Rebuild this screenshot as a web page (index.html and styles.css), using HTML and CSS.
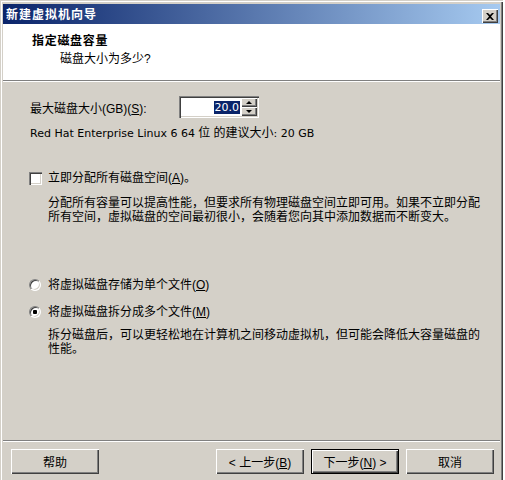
FILE: index.html
```html
<!DOCTYPE html>
<html>
<head>
	<title>新建虚拟机向导</title>
	<link rel="stylesheet" href="styles.css">
</head>
<body>
	<div class="window">
		<div class="titlebar">
			<span class="title">新建虚拟机向导</span>
			<span class="close">
				<svg width="8" height="7" viewBox="0 0 8 7"><path d="M0 0h2l2 2 2-2h2L5 3.5 8 7H6L4 5 2 7H0l3-3.5z" fill="#000"/></svg>
			</span>
		</div>

		<div class="client">
			<!-- wizard header -->
			<div class="header">
				<div class="heading">指定磁盘容量</div>
				<div class="subheading">磁盘大小为多少?</div>
			</div>

			<div class="content">
				<div class="size-row">
					<label for="size">最大磁盘大小(GB)(<u>S</u>):</label>
					<div class="spin">
						<div class="spin-value"><span class="selected">20.0</span></div>
						<div class="spin-buttons">
							<span class="spin-btn"><i class="arrow up"></i></span>
							<span class="spin-btn"><i class="arrow down"></i></span>
						</div>
					</div>
				</div>
				<p class="hint"><span class="latin">Red Hat Enterprise Linux 6 64</span> 位 的建议大小<span class="latin">: 20 GB</span></p>

				<div class="option check-row">
					<input type="checkbox" class="check" id="alloc">
					<label for="alloc">立即分配所有磁盘空间(<u>A</u>)。</label>
				</div>
				<p class="desc desc-alloc">分配所有容量可以提高性能，但要求所有物理磁盘空间立即可用。如果不立即分配所有空间，虚拟磁盘的空间最初很小，会随着您向其中添加数据而不断变大。</p>

				<div class="option radio-single">
					<input type="radio" class="radio" name="store" id="single">
					<label for="single">将虚拟磁盘存储为单个文件(<u>O</u>)</label>
				</div>
				<div class="option radio-multi">
					<input type="radio" class="radio" name="store" id="multi" checked>
					<label for="multi">将虚拟磁盘拆分成多个文件(<u>M</u>)</label>
				</div>
				<p class="desc desc-split">拆分磁盘后，可以更轻松地在计算机之间移动虚拟机，但可能会降低大容量磁盘的性能。</p>
			</div>

			<!-- buttons -->
			<div class="footer">
				<button class="btn">帮助</button>
				<button class="btn btn-back">&lt; 上一步(<u>B</u>)</button>
				<button class="btn btn-default">下一步(<u>N</u>) &gt;</button>
				<button class="btn">取消</button>
			</div>
		</div>
	</div>
</body>
</html>
```

FILE: styles.css
```css
/* page */
body {
  margin: 0;
  background-color: #ffffff;
  font-family: "Liberation Sans", "Noto Sans CJK SC", sans-serif;
  font-size: 12px;
  color: #000;
}

u {
  text-decoration: underline;
  text-underline-offset: 1px;
}

/* latin text in the Tahoma-like face */
.latin {
  font-family: "DejaVu Sans", sans-serif;
  font-size: 11px;
}

/* window frame */
.window {
  width: 503px;
  height: 480px;
  box-sizing: border-box;
  padding: 4px 3px 0 3px;
  background-color: #d4d0c8;
  box-shadow: inset 1px 1px #d4d0c8, inset 2px 2px #ffffff, inset -1px 0 #404040, inset -2px 0 #808080;
  display: flex;
  flex-direction: column;
  overflow: hidden;
}

/* title bar */
.titlebar {
  height: 20px;
  display: flex;
  align-items: center;
  justify-content: space-between;
  padding: 0 2px 0 3px;
  background: linear-gradient(to right, #0a246a, #a6caf0);
}

.title {
  color: #fff;
  font-weight: bold;
  letter-spacing: 1px;
  line-height: 14px;
  padding-top: 2px;
}

.close {
  width: 16px;
  height: 14px;
  margin-top: 4px;
  box-sizing: border-box;
  display: flex;
  align-items: center;
  justify-content: center;
  background-color: #d4d0c8;
  box-shadow: inset 1px 1px #ffffff, inset -1px -1px #404040, inset -2px -2px #808080;
}

.close svg {
  display: block;
}

/* client area */
.client {
  flex: 1;
  display: flex;
  flex-direction: column;
}

.header {
  height: 57px;
  box-sizing: border-box;
  padding: 10px 0 0 29px;
  background-color: #ffffff;
  border-bottom: 1px solid #808080;
  box-shadow: 0 1px #ffffff;
}

.heading {
  font-weight: bold;
  letter-spacing: 0.7px;
  line-height: 14px;
}

.subheading {
  margin: 4px 0 0 28px;
  line-height: 14px;
}

.content {
  flex: 1;
  padding: 15px 20px 0 26px;
}

/* size spinner */
.size-row {
  display: flex;
  align-items: center;
  height: 22px;
}

.size-row label {
  width: 149px;
  padding-left: 1px;
}

.spin {
  width: 80px;
  height: 22px;
  box-sizing: border-box;
  display: flex;
  padding: 2px;
  background-color: #ffffff;
  box-shadow: inset 1px 1px #808080, inset 2px 2px #404040, inset -1px -1px #ffffff, inset -2px -2px #d4d0c8;
}

.spin-value {
  flex: 1;
  display: flex;
  align-items: center;
  justify-content: flex-end;
  padding-right: 1px;
}

.selected {
  background-color: #0a246a;
  color: #fff;
  font-family: "DejaVu Sans", sans-serif;
  font-size: 11px;
  line-height: 13px;
  padding: 0 1px;
}

.spin-buttons {
  width: 16px;
  display: flex;
  flex-direction: column;
}

.spin-btn {
  flex: 1;
  display: flex;
  align-items: center;
  justify-content: center;
  background-color: #d4d0c8;
  box-shadow: inset 1px 1px #ffffff, inset -1px -1px #404040, inset -2px -2px #808080;
}

.arrow {
  width: 0;
  height: 0;
  border-left: 3px solid transparent;
  border-right: 3px solid transparent;
}

.arrow.up {
  border-bottom: 3px solid #000;
}

.arrow.down {
  border-top: 3px solid #000;
}

.hint {
  margin: 8px 0 0 1px;
  line-height: 14px;
}

/* options */
.option {
  display: flex;
  align-items: center;
  gap: 6px;
  line-height: 14px;
}

.check-row {
  margin-top: 30px;
}

.radio-single {
  margin-top: 54px;
}

.radio-multi {
  margin-top: 13px;
}

.check {
  appearance: none;
  margin: 0;
  width: 13px;
  height: 13px;
  background-color: #ffffff;
  box-shadow: inset 1px 1px #808080, inset 2px 2px #404040, inset -1px -1px #ffffff, inset -2px -2px #d4d0c8;
}

.radio {
  appearance: none;
  margin: 0 1px 0 0;
  width: 12px;
  height: 12px;
  box-sizing: border-box;
  border-radius: 50%;
  border: 1px solid;
  border-color: #808080 #ffffff #ffffff #808080;
  background-color: #ffffff;
  box-shadow: inset 1px 1px #404040, inset -1px -1px #d4d0c8;
}

.radio:checked {
  background: radial-gradient(circle at 50% 50%, #000 0, #000 2px, #ffffff 2.5px);
}

.desc {
  margin: 0 0 0 19px;
  width: 436px;
  line-height: 14px;
}

.desc-alloc {
  margin-top: 11px;
}

.desc-split {
  margin-top: 9px;
}

/* footer buttons */
.footer {
  height: 40px;
  box-sizing: border-box;
  display: flex;
  align-items: flex-start;
  gap: 7px;
  padding: 8px 6px 0 8px;
  border-top: 1px solid #808080;
  box-shadow: inset 0 1px #ffffff;
}

.btn {
  width: 88px;
  height: 25px;
  margin: 0;
  padding: 0;
  border: none;
  font-family: inherit;
  font-size: 12px;
  color: #000;
  background-color: #d4d0c8;
  box-shadow: inset 1px 1px #ffffff, inset -1px -1px #404040, inset -2px -2px #808080;
}

.btn-back {
  margin-left: auto;
}

.btn-default {
  border: 1px solid #000;
}
```
